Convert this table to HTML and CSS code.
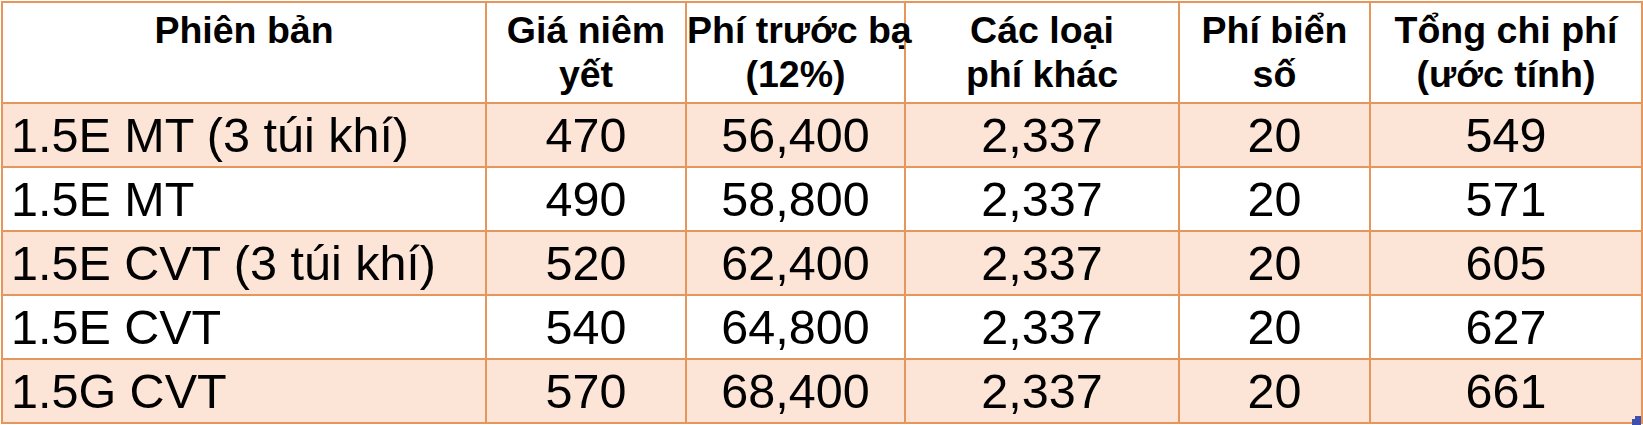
FILE: index.html
```html
<!DOCTYPE html>
<html lang="vi">
<head>
<meta charset="utf-8">
<title>Bảng chi phí</title>
<link rel="stylesheet" href="styles.css">
</head>
<body>
<div class="sheet">
  <div class="cell head">Phiên bản</div>
  <div class="cell head">Giá niêm<br>yết</div>
  <div class="cell head">Phí trước bạ<br>(12%)</div>
  <div class="cell head">Các loại<br>phí khác</div>
  <div class="cell head">Phí biển<br>số</div>
  <div class="cell head">Tổng chi phí<br>(ước tính)</div>

  <div class="cell name tint">1.5E MT (3 túi khí)</div>
  <div class="cell num tint">470</div>
  <div class="cell num tint">56,400</div>
  <div class="cell num tint">2,337</div>
  <div class="cell num tint">20</div>
  <div class="cell num tint">549</div>

  <div class="cell name">1.5E MT</div>
  <div class="cell num">490</div>
  <div class="cell num">58,800</div>
  <div class="cell num">2,337</div>
  <div class="cell num">20</div>
  <div class="cell num">571</div>

  <div class="cell name tint">1.5E CVT (3 túi khí)</div>
  <div class="cell num tint">520</div>
  <div class="cell num tint">62,400</div>
  <div class="cell num tint">2,337</div>
  <div class="cell num tint">20</div>
  <div class="cell num tint">605</div>

  <div class="cell name">1.5E CVT</div>
  <div class="cell num">540</div>
  <div class="cell num">64,800</div>
  <div class="cell num">2,337</div>
  <div class="cell num">20</div>
  <div class="cell num">627</div>

  <div class="cell name tint">1.5G CVT</div>
  <div class="cell num tint">570</div>
  <div class="cell num tint">68,400</div>
  <div class="cell num tint">2,337</div>
  <div class="cell num tint">20</div>
  <div class="cell num tint">661</div>

  <svg class="handle" width="9" height="9" viewBox="0 0 9 9"><path d="M3 0H9V9H0V3H3Z" fill="#3f4fae"/></svg>
</div>
</body>
</html>
```

FILE: styles.css
```css
html, body {
  margin: 0;
  padding: 0;
  background: #ffffff;
}
body {
  font-family: "Liberation Sans", Arial, sans-serif;
  color: #000000;
  width: 1643px;
  height: 425px;
  overflow: hidden;
}
.sheet {
  position: relative;
  margin: 1px 0 0 1px;
  display: grid;
  grid-template-columns: 484px 200px 219px 274px 191px 272px;
  grid-template-rows: 101px repeat(5, 64px);
  width: max-content;
  border-left: 2px solid #e6965a;
  border-top: 2px solid #e6965a;
}
.cell {
  box-sizing: border-box;
  border-right: 2px solid #e6965a;
  border-bottom: 2px solid #e6965a;
  white-space: nowrap;
}
.head {
  font-weight: bold;
  font-size: 37.5px;
  line-height: 44px;
  padding-top: 5px;
  text-align: center;
}
.name, .num {
  font-size: 48.5px;
  line-height: 61px;
  padding-top: 1px;
}
.name {
  padding-left: 8px;
}
.num {
  text-align: center;
}
.tint {
  background: #fce4d6;
}
.handle {
  position: absolute;
  left: 1629px;
  top: 413px;
  display: block;
}
```
